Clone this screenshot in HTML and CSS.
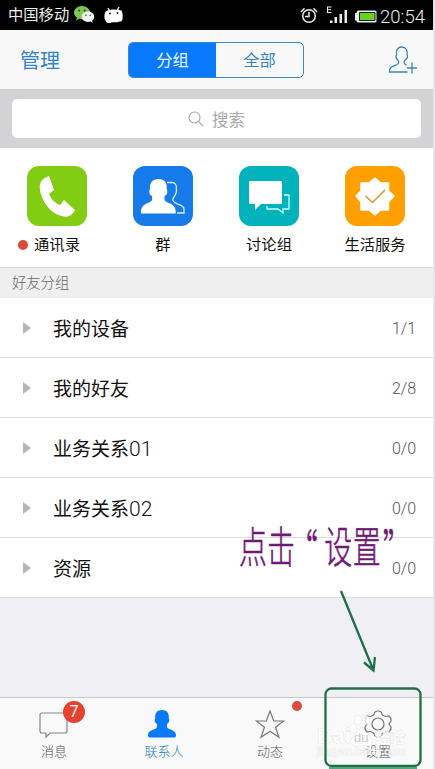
FILE: index.html
```html
<!DOCTYPE html>
<html lang="zh-CN">
<head>
<meta charset="utf-8">
<title>联系人</title>
<link rel="stylesheet" href="styles.css">
</head>
<body>
<div class="screen">
  <header class="status">
    <span class="carrier">中国移动</span>
    <svg class="wechat" width="21" height="18" viewBox="0 0 21 18">
      <path d="M8 0C3.500 0 0 3 0 6.700c0 2 1.200 3.900 3 5l-1 2.700 3.100-1.600c1 .3 2 .4 3 .4 4.400 0 8-3 8-6.500S12.500 0 8 0Z" fill="#7fc653"/>
      <path d="M14 5.500c-3.500 0-6.300 2.300-6.300 5.200s2.800 5.200 6.300 5.200c.8 0 1.600-.1 2.300-.4l2.500 1.300-.7-2.100c1.300-1 2.100-2.400 2.100-4 0-2.900-2.700-5.200-6.200-5.200Z" fill="#f3f5f5"/>
      <g fill="#28471f"><circle cx="5.200" cy="4.500" r="1"/><circle cx="10.700" cy="4.500" r="1"/><circle cx="12" cy="9.200" r=".8"/><circle cx="16.200" cy="9.200" r=".8"/></g>
    </svg>
    <svg class="robot" width="21" height="17" viewBox="0 0 21 17">
      <path d="M5 1l1.500 2.500M16 0l-1.500 3" stroke="#fff" stroke-width="1.300"/>
      <path d="M2.500 4.500C7 2 13 2 18.500 3.500c1 2.500 1.500 4.500 1 7 .5 2-.5 4-2.500 4-1.500 0-2 .8-4 .8-2 0-3-.3-4.500.2-2.500 1-5.500.7-5.500-1.500-2-2-2-6-.5-9.500Z" fill="#fff"/>
      <circle cx="7" cy="6.500" r=".9"/><circle cx="14.500" cy="6" r=".9"/>
    </svg>
    <svg class="signals" width="77" height="20" viewBox="0 0 77 20">
      <g fill="none" stroke="#eee" stroke-width="1.500"><circle cx="9" cy="11" r="6.300"/><path d="M9 7v4.500h-4M1 7l3.500-3.700M17 7l-3.500-3.700"/></g>
      <path d="M27 2h4.500M27 4.700h4M27 7.500h4.500M27.500 2v6" fill="none" stroke="#eee"/>
      <path d="M30 15.500h2.500V18H30zM34.500 12H37v6h-2.500zM39.500 9H42v9h-2.500zM44.500 5H47v13h-2.500z" fill="#eee"/>
      <path d="M58 5.500h17q1.500 0 1.500 1.500v9q0 1.500-1.500 1.500H58q-1.500 0-1.500-2H55V8h1.500Q56.500 5.500 58 5.500Z" fill="#eee"/><path d="M59.500 7.500H75v8H59.500z" fill="#69cf22" stroke="#10230a"/>
    </svg>
    <time class="clock">20:54</time>
  </header>
  <nav class="topbar">
    <a class="manage">管理</a>
    <div class="segment"><span class="seg active">分组</span><span class="seg">全部</span></div>
    <svg class="add" width="30" height="30" viewBox="0 0 30 30" fill="none" stroke="#3185c9" stroke-width="1.300">
      <path d="M18.500 20c-3-.8-2.500-3-1.500-5 2-1.300 3-3.500 2-5.500.7-4-1-7.500-5.200-7.500S8 5 8.500 9.500c-1 2-.2 4.200 1.500 5.500 1.500 3 .5 4-2 5-4 1.500-7 2.500-6.500 7h18M19 23h10M24 17.500v11"/>
    </svg>
  </nav>
  <div class="searchbar"><div class="search">
    <svg width="16" height="16" viewBox="0 0 16 16" fill="none" stroke="#aaa" stroke-width="1.200"><circle cx="6.500" cy="6.500" r="5.500"/><path d="M10.500 10.500l4.500 4.500"/></svg>
    <span>搜索</span>
  </div></div>
  <section class="shortcuts">
    <div class="shortcut">
      <svg class="tile green" viewBox="0 0 60 60"><path d="M20 11l2-1 5 14-5 4c2 5 6 9 11 11l4-5 11 10c-2 5-7 8-13 6-11-2-20-14-22-26-1-6 1-11 7-13Z" fill="#fff"/></svg>
      <span class="label"><i class="dot"></i>通讯录</span>
    </div>
    <div class="shortcut">
      <svg class="tile blue" viewBox="0 0 60 60"><path d="M25.500 13c6 0 9 4 8.200 10 1.500 3 .3 6-2 7-.5 4 0 5 2 6 6 2.500 9.500 4 9 11.500H8c-.5-7 3-9 9-11.500 2-1 2.500-2 2-6-2.500-1-3.500-4-2-7-.7-6 2.500-10 8.500-10Z" fill="#fff"/><path d="M34 16.500h5c3 0 5 2.500 4.300 6.500.8 3-.3 5-2.300 8-2 2.500-1.500 4 1 5.500 4 3 9 3 9 6.500v4h-7" fill="none" stroke="#d8f0ff" stroke-width="1.300"/></svg>
      <span class="label">群</span>
    </div>
    <div class="shortcut">
      <svg class="tile teal" viewBox="0 0 60 60"><path d="M11 15h31q1 0 1 1v21q0 1-1 1H22l-6 6v-6h-5q-1 0-1-1V16q0-1 1-1Z" fill="#fff"/><path d="M45 29h5v14h-6v4l-5-4H28v-3" fill="none" stroke="#ccffff" stroke-width="1.300"/></svg>
      <span class="label">讨论组</span>
    </div>
    <div class="shortcut">
      <svg class="tile orange" viewBox="0 0 60 60"><path d="M30 12l5.500 5h8v8l5.500 5-5.500 6v8h-8L30 49l-6-5h-8v-8l-5-6 5-5v-8h8Z" fill="#fff" stroke="#fff" stroke-width="1.500" stroke-linejoin="round"/><path d="M20.500 30l7 6.500L40 24" fill="none" stroke="#d99836" stroke-width="1.600"/></svg>
      <span class="label">生活服务</span>
    </div>
  </section>
  <h2 class="heading">好友分组</h2>
  <ul class="groups">
    <li class="group"><i class="caret"></i><span class="name">我的设备</span><span class="count">1/1</span></li>
    <li class="group"><i class="caret"></i><span class="name">我的好友</span><span class="count">2/8</span></li>
    <li class="group"><i class="caret"></i><span class="name">业务关系<span class="num">01</span></span><span class="count">0/0</span></li>
    <li class="group"><i class="caret"></i><span class="name">业务关系<span class="num">02</span></span><span class="count">0/0</span></li>
    <li class="group"><i class="caret"></i><span class="name">资源</span><span class="count">0/0</span></li>
  </ul>
  <footer class="tabs">
    <div class="tab"><svg width="30" height="30" viewBox="0 0 30 30" fill="none" stroke="#858585" stroke-width="1.200"><path d="M3 4h23q2 0 2 2v16q0 2-2 2H11l-4 4v-4H3q-2 0-2-2V6q0-2 2-2Z"/></svg><span>消息</span><b class="badge">7</b></div>
    <div class="tab current"><svg width="30" height="30" viewBox="0 0 30 30"><path d="M15 1c5 0 7.300 3.300 6.700 8 1.300 2.500.3 5-1.700 6-.3 3 0 4 2 5 4 1.500 7 2.500 7 6.500 0 1.500-1 2-2 2H3c-1 0-2-.5-2-2 0-4 3-5 7-6.500 2-1 2.300-2 2-5-2-1-3-3.500-1.700-6C7.700 4.300 10 1 15 1Z" fill="#0879f9"/></svg><span>联系人</span></div>
    <div class="tab"><svg width="30" height="30" viewBox="0 0 30 30" fill="none" stroke="#777" stroke-width="1.200"><path d="M15 2l3.700 10h10.100l-8.200 6.300 3.300 10-8.900-6-8.900 6 3.300-10L1.200 12h10.100Z"/></svg><span>动态</span><b class="alert"></b></div>
    <div class="tab"><svg width="30" height="30" viewBox="0 0 30 30" fill="none" stroke="#777" stroke-width="1.200"><path d="M12 3q3-2 6 0l1.500 3 3 1.500 3.500-.5q2.500 2 2 5l-2 3 2 3q.5 3-2 5l-3.500-.5-3 1.500-1.500 3q-3 2-6 0l-1.500-3-3-1.500L4 23q-2.500-2-2-5l2-3-2-3q-.5-3 2-5l3.500.5 3-1.500Z"/><circle cx="15" cy="15" r="6"/></svg><span>设置</span></div>
  </footer>
  <svg class="notes" width="435" height="769" viewBox="0 0 435 769">
    <g class="mark">
      <text x="317" y="743" font-size="21" font-weight="700" textLength="34" lengthAdjust="spacingAndGlyphs">Bai</text>
      <ellipse cx="353" cy="728" rx="3" ry="4"/><ellipse cx="358" cy="720" rx="3" ry="4.500"/><ellipse cx="366" cy="720" rx="3" ry="4.500"/><path d="M352 744c-3-5 3-8 7-15 8 0 9 7 13 12 1 6-4 5-9 4-4 1-8 2-11-1Z"/>
      <text x="354" y="742" font-size="13" class="du">du</text>
      <text x="375" y="743" font-size="15" font-weight="700">经验</text>
      <text x="317" y="755" font-size="11" textLength="88">jingyan.baidu.com</text>
    </g>
    <text class="callout" transform="translate(239 563) scale(.65 1)" x="0 43 78 131 175 221" y="0 0 3 0 0 3">点击“设置”</text>
    <g fill="none" stroke="#1f7048" stroke-width="2.300">
      <path d="M341 591l31.500 77M364 662.500l9.500 8 1.500-13.500"/>
      <rect x="325.500" y="688.500" width="95" height="77.500" rx="6"/>
      <path d="M329 768h88" stroke="#55a580" stroke-width="2"/>
    </g>
  </svg>
</div>
</body>
</html>
```
FILE: styles.css
```css
* { box-sizing: border-box; }
body { margin: 0; background: #e4e5e9; font-family: Roboto, "Noto Sans CJK SC", sans-serif; }
.screen { position: relative; width: 433px; height: 769px; background: #efeff4; display: flex; flex-direction: column; }
svg { display: block; flex: none; }
.status { height: 30px; background: #000; color: #eee; display: flex; align-items: center; padding-left: 8px; flex: none; }
.carrier { font-size: 15.300px; width: 66px; white-space: nowrap; }
.robot { margin-left: 8px; }
.signals { margin-left: 176px; margin-right: 3px; }
.clock { font-size: 18.500px; font-weight: 300; padding-top: 3px; }
.carrier, .clock { line-height: 30px; }
.topbar { height: 60px; background: #f8f8f8; border-bottom: 1px solid #cbcbce; display: flex; align-items: center; padding: 0 15px 0 20px; flex: none; justify-content: space-between; }
.manage { color: #3284c6; font-size: 20px; width: 108px; }
.segment { display: flex; width: 176px; height: 36px; border: 1px solid #3789ce; border-radius: 5px; overflow: hidden; margin-right: auto; }
.seg { flex: 1; text-align: center; line-height: 36px; font-size: 16.300px; color: #3284c6; }
.active { background: #0879fa; color: #eaf7ff; }
.searchbar { height: 58px; padding: 9px 12px 10px; background: #d3d3d6; flex: none; }
.search { height: 39px; border-radius: 5px; background: #fff; display: flex; justify-content: center; align-items: center; gap: 8px; color: #aaa; font-size: 16.500px; }
.shortcuts { height: 119px; padding: 18px 5px 0 4px; display: grid; grid-template-columns: repeat(4, 1fr); background: #fff; flex: none; }
.shortcut { display: flex; flex-direction: column; align-items: center; }
.tile { width: 60px; height: 60px; border-radius: 12px; }
.green { background: #82cc14; }
.blue { background: #167be9; }
.teal { background: #00b2bc; }
.orange { background: #ff9f00; }
.label { margin-top: 8px; font-size: 15.300px; line-height: 22px; display: flex; align-items: center; color: #111; }
.dot { width: 10px; height: 10px; border-radius: 50%; background: #db4938; margin: 0 6px 0 -16px; }
.heading { margin: 0; height: 31px; flex: none; border-top: 1px solid #d8d8d8; background: #efefef; padding-left: 12px; font-size: 14.300px; font-weight: 300; color: #666; line-height: 31px; }
.groups { list-style: none; padding: 0; margin: 0; background: #fff; flex: none; }
.group { height: 60px; border-bottom: 1px solid #dedede; display: flex; align-items: center; padding: 1px 17px 0 23px; }
.caret { border-left: 8px solid #b5b5b5; border-top: 6.500px solid transparent; border-bottom: 6.500px solid transparent; }
.name { margin-left: 22px; padding-top: 4px; font-size: 19px; line-height: 28px; color: #111; }
.num { font-size: 21px; font-weight: 300; line-height: 1; }
.count { margin-left: auto; font-size: 16px; font-weight: 300; color: #555; }
.tabs { margin-top: auto; height: 72px; border-top: 1px solid #c8c8cc; background: #f9f9f9; display: grid; grid-template-columns: repeat(4, 108px); }
.tab { position: relative; display: flex; flex-direction: column; align-items: center; padding-top: 11px; font-size: 13px; font-weight: 300; line-height: 19px; color: #555; }
.tab span { margin-top: 3px; }
.current { color: #2682c3; }
.current span { padding-left: 4px; }
.badge { position: absolute; left: 63px; top: 3px; width: 22px; height: 22px; line-height: 22px; border-radius: 50%; background: #e54231; color: #fff; text-align: center; font-size: 16px; font-weight: 400; }
.alert { position: absolute; left: 76px; top: 3px; width: 10px; height: 10px; border-radius: 50%; background: #dc4c3e; }
.notes { position: absolute; left: 0; top: 0; pointer-events: none; }
.mark { font-family: "Liberation Sans", "Noto Sans CJK SC", sans-serif; fill: #fff; stroke: #d5d5d5; stroke-width: .7px; paint-order: stroke; opacity: .75; }
.du { fill: #bbb; stroke: none; }
.callout { font-family: "Noto Sans CJK SC", serif; font-size: 43px; fill: #711777; stroke: #711777; stroke-width: .6px; font-weight: 300; }
```
